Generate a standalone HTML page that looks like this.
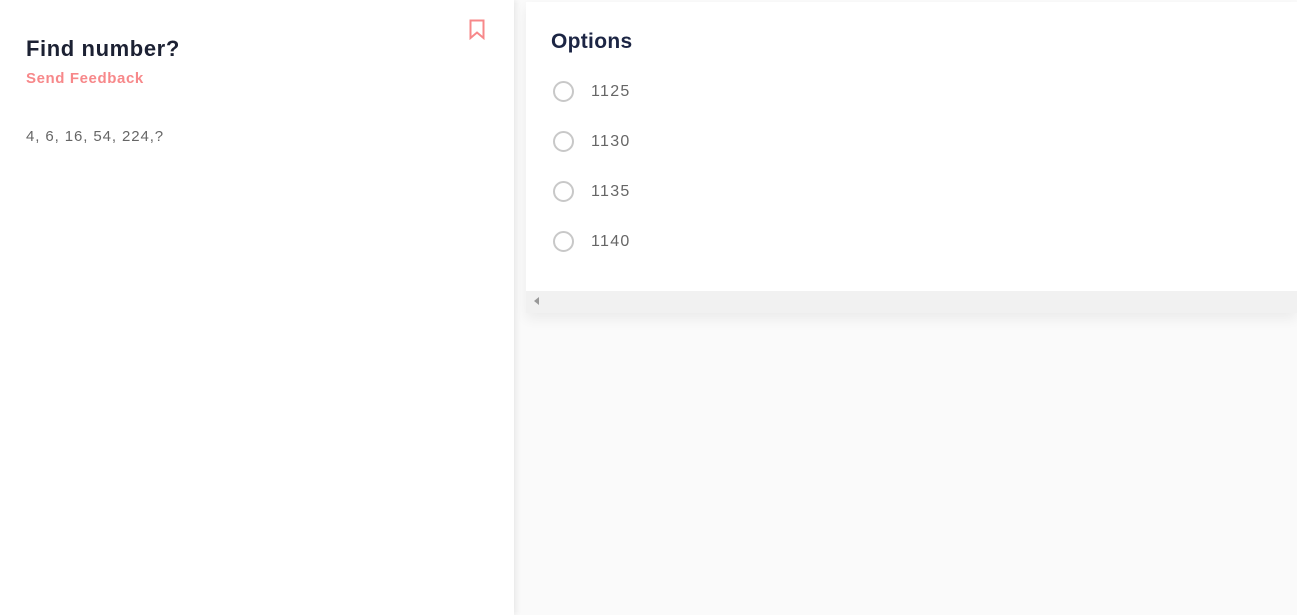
<!DOCTYPE html>
<html><head><meta charset="utf-8"><style>
*{margin:0;padding:0;box-sizing:border-box}
html,body{width:1297px;height:615px;overflow:hidden;background:#fafafa;font-family:"Liberation Sans",sans-serif}
.left{position:absolute;left:0;top:0;width:514px;height:615px;background:#fff;box-shadow:2px 0 6px rgba(0,0,0,0.08)}
h1{position:absolute;left:26px;top:36px;font-size:22px;font-weight:bold;color:#1c2133;letter-spacing:0.6px}
.fb{position:absolute;left:26px;top:70px;font-size:15px;font-weight:bold;color:#f7888a;letter-spacing:0.6px}
.q{position:absolute;left:26px;top:128px;font-size:15px;color:#666;letter-spacing:0.9px}
.bm{position:absolute;left:469px;top:19px}
.card{position:absolute;left:526px;top:2px;width:771px;height:311px;background:#f1f1f1;box-shadow:0 6px 12px rgba(0,0,0,0.06)}
.inner{position:absolute;left:0;top:0;width:771px;height:289px;background:#fff}
h2{position:absolute;left:25px;top:28px;font-size:21px;font-weight:bold;color:#1c2544;letter-spacing:0.3px}
.opt{position:absolute;left:27px;height:22px;display:flex;align-items:center;font-size:16px;color:#666;letter-spacing:1.3px}
.opt i{width:21px;height:21px;border:2px solid #c8c8c8;border-radius:50%;margin-right:17px}
.opt span{position:relative;top:1px}
.arr{position:absolute;left:8px;top:295px;width:0;height:0;border-top:4px solid transparent;border-bottom:4px solid transparent;border-right:5px solid #999}
</style></head><body>
<div class="left">
<h1>Find number?</h1>
<div class="fb">Send Feedback</div>
<div class="q">4, 6, 16, 54, 224,?</div>
<svg class="bm" width="16" height="21" viewBox="0 0 16 21"><path d="M1.5 1.5H14.5V19L8 13.5 1.5 19Z" fill="none" stroke="#f7888a" stroke-width="2"/></svg>
</div>
<div class="card"><div class="inner">
<h2>Options</h2>
<div class="opt" style="top:78px"><i></i><span>1125</span></div>
<div class="opt" style="top:128px"><i></i><span>1130</span></div>
<div class="opt" style="top:178px"><i></i><span>1135</span></div>
<div class="opt" style="top:228px"><i></i><span>1140</span></div>
</div><div class="arr"></div></div>
</body></html>
